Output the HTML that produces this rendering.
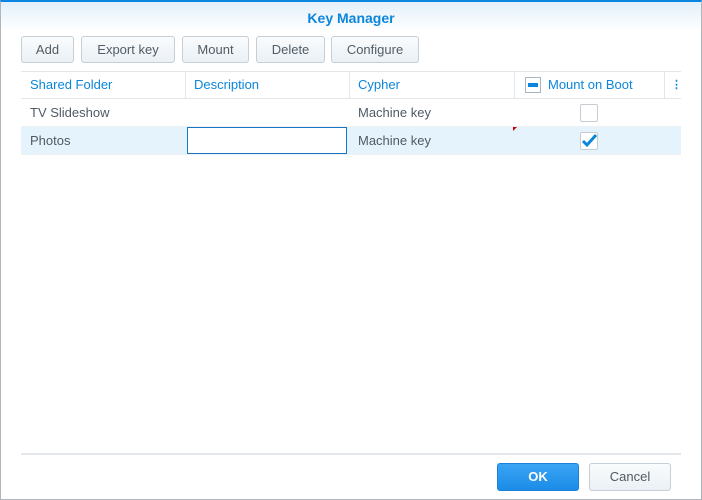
<!DOCTYPE html>
<html><head><style>
*{box-sizing:border-box;margin:0;padding:0}
body{width:702px;height:500px;background:#fff;font-family:"Liberation Sans",sans-serif;font-size:13px;color:#505a64;position:relative;overflow:hidden}
.win{position:absolute;left:0;top:0;width:702px;height:500px;border:1px solid #b0b6bc;border-top:2px solid #0a86e0;z-index:5}
.title{position:absolute;left:1px;top:2px;width:700px;height:30px;background:linear-gradient(#e4f0fa,#fff);text-align:center;line-height:32px;font-weight:bold;color:#0b86dc;font-size:14px}
.btn{position:absolute;top:36px;height:27px;border:1px solid #c6ced6;border-radius:3px;background:linear-gradient(#fafcfd,#eaf0f5);text-align:center;line-height:25px;color:#525c66}
.hdr{position:absolute;left:21px;top:71px;width:660px;height:28px;border-top:1px solid #e3e7eb;border-bottom:1px solid #e3e7eb}
.hdr span{position:absolute;top:0;line-height:26px;color:#0b86dc}
.sep{position:absolute;top:0;width:1px;height:26px;background:#e3e7eb}
.row{position:absolute;left:21px;width:660px;height:28px;border-bottom:1px solid #eef1f4}
.row span{position:absolute;line-height:28px}
.cb{position:absolute;width:18px;height:18px;border:1px solid #c6ccd2;background:#fff;border-radius:2px}
</style></head><body>
<div class="win"></div>
<div class="title">Key Manager</div>
<div class="btn" style="left:21px;width:53px">Add</div>
<div class="btn" style="left:81px;width:94px">Export key</div>
<div class="btn" style="left:182px;width:67px">Mount</div>
<div class="btn" style="left:256px;width:69px">Delete</div>
<div class="btn" style="left:331px;width:88px">Configure</div>
<div class="hdr">
<span style="left:9px">Shared Folder</span><div class="sep" style="left:164px"></div>
<span style="left:173px">Description</span><div class="sep" style="left:328px"></div>
<span style="left:337px">Cypher</span><div class="sep" style="left:493px"></div>
<div style="position:absolute;left:504px;top:5px;width:16px;height:16px;border:1px solid #a8b4c0;background:#fff"><div style="position:absolute;left:2px;top:5px;width:10px;height:4px;background:#0b86dc"></div></div>
<span style="left:527px">Mount on Boot</span><div class="sep" style="left:643px"></div>
<span style="left:650px;font-weight:bold;font-size:11px">⋮</span>
</div>
<div class="row" style="top:99px"><span style="left:9px">TV Slideshow</span><span style="left:337px">Machine key</span><div class="cb" style="left:559px;top:5px"></div></div>
<div class="row" style="top:127px;background:#e5f3fd"><span style="left:9px">Photos</span>
<div style="position:absolute;left:166px;top:0;width:160px;height:27px;border:1px solid #1a75c2;background:#fff"></div>
<span style="left:337px">Machine key</span>
<div style="position:absolute;left:492px;top:0;width:0;height:0;border-top:4px solid #c00;border-right:4px solid transparent"></div>
<div class="cb" style="left:559px;top:5px"><svg width="18" height="18" style="position:absolute;left:-1px;top:-2px"><path d="M3 10 L7 14 L16 4" stroke="#0b86dc" stroke-width="3" fill="none"/></svg></div></div>
<div style="position:absolute;left:21px;top:453px;width:660px;height:2px;background:#e3e7eb"></div>
<div style="position:absolute;left:497px;top:463px;width:82px;height:28px;border:1px solid #1a82d8;border-radius:3px;background:linear-gradient(#3aa4f4,#1c8ce8);color:#fff;font-weight:bold;text-align:center;line-height:26px">OK</div>
<div style="position:absolute;left:589px;top:463px;width:82px;height:28px;border:1px solid #c6ced6;border-radius:3px;background:linear-gradient(#fafcfd,#eaf0f5);text-align:center;line-height:26px">Cancel</div>
</body></html>
